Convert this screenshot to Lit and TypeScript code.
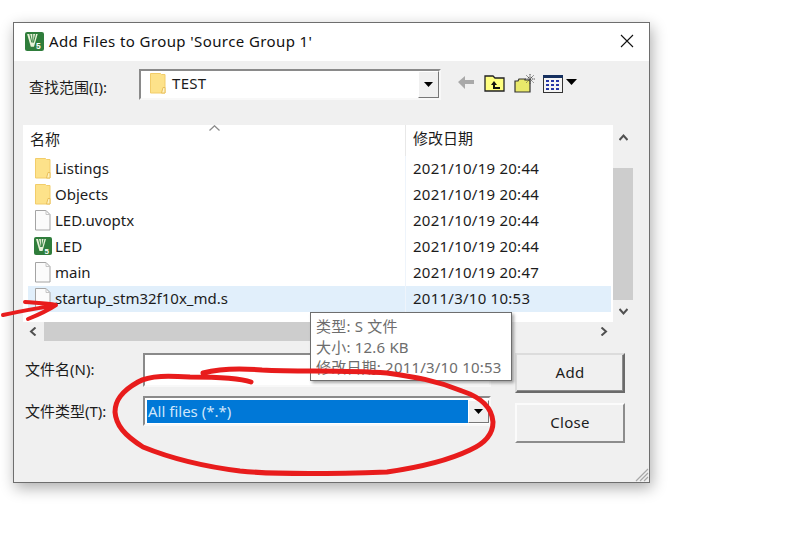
import { LitElement, html, css, svg } from "lit";
import { customElement } from "lit/decorators.js";

const folder = html`<svg class="ic" width="18" height="22" viewBox="0 0 18 22"><path d="M1.500 1.500h10l1 1h3.500v18.500h-14.500z" fill="#fde28a" stroke="#f2cd6a"/><path d="M14 15.500h2v5.500h-3.500z" fill="#fff3c4" stroke="#e9bf5a"/></svg>`;
const doc = html`<svg class="ic" width="18" height="22" viewBox="0 0 18 22"><path d="M1.500 1.500h10.500l4 4v15.500h-14.500z" fill="#fbfbfb" stroke="#a4a4a4"/><path d="M12 1.500v4h4" fill="none" stroke="#c4c4c4"/></svg>`;
const logo = (s: number) => html`<svg class="logo" width=${s} height=${s} viewBox="0 0 18 18"><rect width="18" height="18" rx="2" fill="#2f7d3b"/><path d="M2 2h10l-3.500 12h-3z" fill="#e8f2d9"/><path d="M4.500 2l2 8M7.300 2l.2 8M10 2l-2 8" stroke="#2f7d3b" fill="none" stroke-width=".9"/><text x="10.500" y="16.500" font-size="8" font-weight="700" fill="#fff" font-family="Liberation Sans">5</text></svg>`;
const caret = html`<svg width="9" height="5" viewBox="0 0 9 5"><path d="M0 0h9L4.500 5z" fill="#000"/></svg>`;
const chev = (d: string) => html`<svg width="9" height="9" viewBox="0 0 9 9"><path d=${d} fill="none" stroke="#505050" stroke-width="2"/></svg>`;

const rows = [
  { n: "Listings", d: "2021/10/19 20:44", i: folder },
  { n: "Objects", d: "2021/10/19 20:44", i: folder },
  { n: "LED.uvoptx", d: "2021/10/19 20:44", i: doc },
  { n: "LED", d: "2021/10/19 20:44", i: logo(18) },
  { n: "main", d: "2021/10/19 20:47", i: doc },
  { n: "startup_stm32f10x_md.s", d: "2011/3/10 10:53", i: doc, sel: true },
];

const marks = svg`
  <path d="M251 382C240 378 215 377 190 377C170 376 150 375 138 382C122 391 115 400 115 412C116 425 124 435 143 447C165 456 200 466 240 471C280 475 330 474 387 472C415 468 445 462 470 450C488 442 493 432 493 422C492 408 483 398 462 391C435 380 415 377 387 373C340 370 300 372 262 370C240 368 222 368 203 373" fill="none" stroke="#e81c1c" stroke-width="5" stroke-linecap="round" stroke-linejoin="round"/>
  <path d="M3 315C20 311 40 308 56 305M25 302C35 303 46 303 56 305C47 311 38 315 28 319" fill="none" stroke="#e81c1c" stroke-width="4" stroke-linecap="round" stroke-linejoin="round"/>`;

@customElement("app-root")
export class AppRoot extends LitElement {
  static styles = css`
    :host { display: block; position: relative; width: 808px; height: 542px; background: #fff; overflow: hidden;
      font-family: "Noto Sans", "Noto Sans CJK SC", sans-serif; font-size: 15px; color: #1c1c1c; }
    * { box-sizing: border-box; }
    .dialog { position: relative; margin: 22px 0 0 13px; width: 637px; height: 461px; display: flex; flex-direction: column;
      background: #f0f0f0; border: 1px solid #6e6e6e; box-shadow: 2px 5px 14px rgba(0,0,0,.32); }
    .title { height: 38px; background: #fff; display: flex; align-items: center; padding: 0 0 2px 11px; gap: 5px; font-size: 15px; color: #111; flex: none; letter-spacing: .4px; }
    .title .x { margin-left: auto; margin-right: 15px; display: flex; }
    .tools { height: 64px; flex: none; display: flex; padding: 8px 0 0 15px; }
    .lookin { width: 110px; padding-top: 8px; line-height: 21px; }
    .combo { width: 302px; height: 31px; background: #fff; display: flex; align-items: center; padding-left: 8px; gap: 5px;
      border: 2px solid; border-color: #8a8a8a #f8f8f8 #f8f8f8 #8a8a8a; position: relative; letter-spacing: .3px; }
    .combo .lift { margin-bottom: 3px; display: flex; }
    .combo .drop { margin-left: auto; width: 21px; height: 27px; background: #f0f0f0; border: 1px solid; border-color: #fff #777 #777 #fff; display: flex; align-items: center; justify-content: center; }
    .tbar { display: flex; align-items: flex-start; margin: 4px 0 0 17px; }
    .list { flex: none; margin-left: 9px; display: grid; grid-template-columns: 590px 24px; grid-template-rows: 197px 19px; }
    .files { background: #fff; position: relative; display: flex; flex-direction: column; }
    .head { height: 31px; flex: none; display: grid; grid-template-columns: 382px 1fr; padding-top: 3px; line-height: 22px; }
    .head span { padding-left: 7px; }
    .head span + span { padding-left: 7px; border-left: 1px solid #e8e8e8; margin-top: -3px; padding-top: 2px; }
    .sort { position: absolute; left: 186px; top: 0; display: flex; }
    .row { height: 26px; margin: 0 2px 0 5px; display: grid; grid-template-columns: 377px 1fr; align-items: stretch; }
    .row.sel { background: #e1effb; }
    .nm { display: flex; align-items: center; padding: 0 0 3px 6px; gap: 3px; }
    .ic { flex: none; }
    .logo { flex: none; }
    .dt { display: flex; align-items: center; padding: 0 0 3px 7px; border-left: 1px solid #eef4fb; letter-spacing: .25px; }
    .vbar { display: flex; flex-direction: column; align-items: stretch; padding-right: 4px; }
    .vbar .a { height: 43px; display: flex; justify-content: center; align-items: flex-start; padding-top: 8px; flex: none; }
    .vbar .t { height: 132px; background: #cdcdcd; flex: none; }
    .vbar .b { flex: 1; display: flex; justify-content: center; align-items: center; }
    .hbar { grid-column: 1 / 2; display: flex; align-items: stretch; }
    .hbar .a { width: 21px; display: flex; align-items: center; justify-content: center; flex: none; }
    .hbar .t { width: 360px; background: #cdcdcd; }
    .hbar .a.r { margin-left: auto; width: 18px; margin-right: 1px; }
    .form { flex: none; display: flex; padding: 12px 0 0 11px; gap: 24px; }
    .fields { display: grid; grid-template-columns: 118px 348px; grid-template-rows: 34px 30px; row-gap: 9px; align-items: center; }
    .l1 { padding-bottom: 4px; }
    .l2 { padding-bottom: 2px; }
    .input { height: 34px; background: #fff; border: 2px solid; border-color: #8a8a8a #f8f8f8 #f8f8f8 #8a8a8a; }
    .type { height: 30px; background: #fff; border: 2px solid; border-color: #8a8a8a #f8f8f8 #f8f8f8 #8a8a8a; display: flex; padding: 2px 0 1px 2px; }
    .type .v { width: 321px; background: #0078d7; color: #cfe6fb; padding-left: 1px; line-height: 22px; }
    .type .drop { flex: 1; background: #f0f0f0; border: 1px solid; border-color: #fff #777 #777 #fff; display: flex; align-items: center; justify-content: center; }
    .btns { display: flex; flex-direction: column; gap: 10px; width: 110px; }
    .btn { height: 40px; display: flex; align-items: center; justify-content: center; padding-bottom: 2px; font-size: 15px; letter-spacing: .3px;
      background: #f0f0f0; border: 2px solid; border-color: #fbfbfb #8c8c8c #8c8c8c #fbfbfb; }
    .btn.def { border-color: #6a6a6a; border-top-color: #dcdcdc; border-left-color: #dcdcdc; box-shadow: inset -1px -1px 0 #8c8c8c; }
    .grip { position: absolute; right: 0; bottom: 0; display: flex; }
    .tip { position: absolute; left: 310px; top: 312px; width: 202px; height: 69px; background: #fff; border: 1px solid #6e6e6e;
      box-shadow: 2px 2px 3px rgba(0,0,0,.35); color: #6d6d6d; padding: 3px 0 0 5px; line-height: 20.500px; font-size: 15px; white-space: nowrap; letter-spacing: .2px; }
    .marks { position: absolute; left: 0; top: 0; pointer-events: none; }
  `;

  render() {
    return html`
      <div class="dialog">
        <div class="title">${logo(19)}<span>Add Files to Group 'Source Group 1'</span>
          <span class="x"><svg width="14" height="14" viewBox="0 0 14 14"><path d="M1 1l12 12M13 1L1 13" stroke="#111" stroke-width="1.100"/></svg></span>
        </div>
        <div class="tools">
          <div class="lookin">查找范围(I):</div>
          <div class="combo"><span class="lift">${folder}</span><span class="lift">TEST</span><span class="drop">${caret}</span></div>
          <div class="tbar">
            <svg width="125" height="22" viewBox="0 0 125 22">
              <path d="M0 9l7-6v4h9v4H7v5z" fill="#a9a9a9"/>
              <path d="M27 18V3h8l2 2h9v13z" fill="#ffff80" stroke="#222" stroke-width="1.300"/>
              <path d="M33 12l3-4 3 4h-2v2h5v2h-7v-4z" fill="#111"/>
              <path d="M57 19V8h3l1-2h6v1h5v12z" fill="#e9e96a" stroke="#333" stroke-width="1.200"/>
              <path d="M72 1v10M67 6h10M68.500 2.500l7 7M75.500 2.500l-7 7" stroke="#444" stroke-width="1" stroke-dasharray="1.500 .8"/>
              <rect x="85.500" y="2.500" width="19" height="17" fill="#f4f4f4" stroke="#333"/>
              <rect x="85" y="2" width="20" height="3" fill="#16305f"/>
              <path d="M88 8h3M93 8h3M98 8h3M88 12h3M93 12h3M98 12h3M88 16h3M93 16h3M98 16h3" stroke="#2636a8" stroke-width="2"/>
              <path d="M108 6h11l-5.500 6z" fill="#000"/>
            </svg>
          </div>
        </div>
        <div class="list">
          <div class="files">
            <div class="sort"><svg width="11" height="6" viewBox="0 0 11 6"><path d="M.5 5.500L5.500 .8l5 4.700" fill="none" stroke="#8a8a8a" stroke-width="1.300"/></svg></div>
            <div class="head"><span>名称</span><span>修改日期</span></div>
            ${rows.map((r) => html`<div class="row ${r.sel ? "sel" : ""}"><div class="nm">${r.i}<span>${r.n}</span></div><div class="dt">${r.d}</div></div>`)}
          </div>
          <div class="vbar">
            <div class="a">${chev("M.5 7L4.500 2.500 8.500 7")}</div>
            <div class="t"></div>
            <div class="b">${chev("M.5 2L4.500 6.500 8.500 2")}</div>
          </div>
          <div class="hbar">
            <div class="a">${chev("M6.500 .5L2 4.500l4.500 4")}</div>
            <div class="t"></div>
            <div class="a r">${chev("M2.500 .5L7 4.500l-4.500 4")}</div>
          </div>
        </div>
        <div class="form">
          <div class="fields">
            <div class="l1">文件名(N):</div>
            <div class="input"></div>
            <div class="l2">文件类型(T):</div>
            <div class="type"><div class="v">All files (*.*)</div><div class="drop">${caret}</div></div>
          </div>
          <div class="btns"><div class="btn def">Add</div><div class="btn">Close</div></div>
        </div>
        <div class="grip"><svg width="14" height="14" viewBox="0 0 14 14"><path d="M13 1L1 13M13 5L5 13M13 9l-4 4" stroke="#a8a8a8" stroke-width="1.200"/></svg></div>
      </div>
      <div class="tip">类型: S 文件<br />大小: 12.6 KB<br />修改日期: 2011/3/10 10:53</div>
      <svg class="marks" width="808" height="542" viewBox="0 0 808 542">${marks}</svg>
    `;
  }
}
